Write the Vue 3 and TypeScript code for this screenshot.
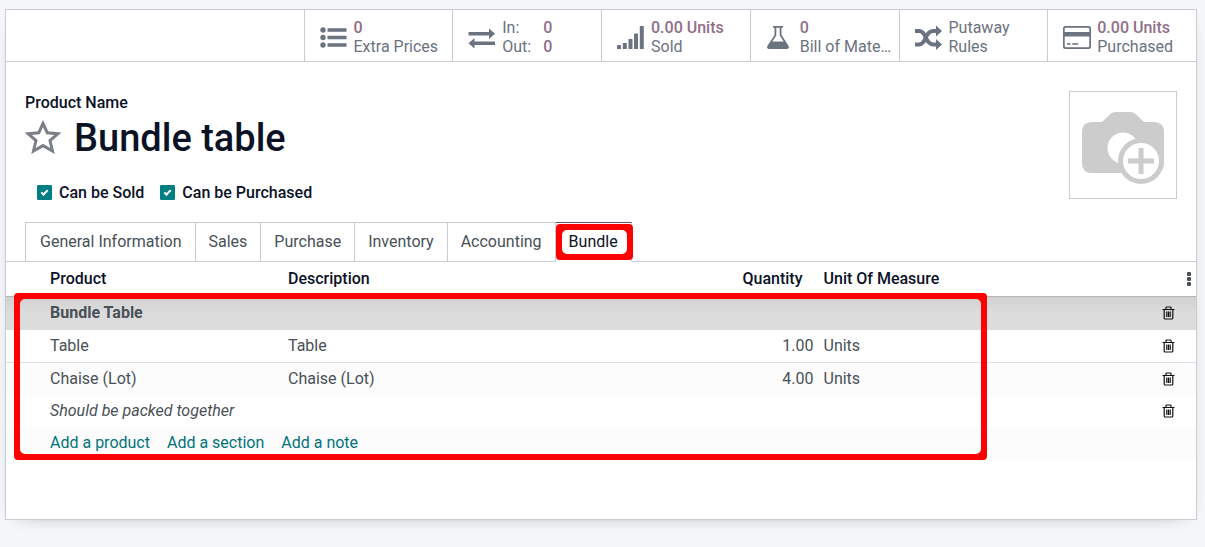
<script setup lang="ts">
import { ref } from 'vue'

interface Stat {
  icon: 'list' | 'exchange' | 'signal' | 'flask' | 'shuffle' | 'card'
  value?: string
  label?: string
  lines?: string[]
  pairs?: [string, string][]
}

interface Line {
  kind: 'section' | 'product' | 'note'
  name: string
  description?: string
  quantity?: string
  uom?: string
}

const stats: Stat[] = [
  { icon: 'list', value: '0', label: 'Extra Prices' },
  { icon: 'exchange', pairs: [['In:', '0'], ['Out:', '0']] },
  { icon: 'signal', value: '0.00 Units', label: 'Sold' },
  { icon: 'flask', value: '0', label: 'Bill of Mate…' },
  { icon: 'shuffle', lines: ['Putaway', 'Rules'] },
  { icon: 'card', value: '0.00 Units', label: 'Purchased' },
]

const tabs = ['General Information', 'Sales', 'Purchase', 'Inventory', 'Accounting', 'Bundle']
const activeTab = ref('Bundle')
const canBeSold = ref(true)
const canBePurchased = ref(true)

const lines: Line[] = [
  { kind: 'section', name: 'Bundle Table' },
  { kind: 'product', name: 'Table', description: 'Table', quantity: '1.00', uom: 'Units' },
  { kind: 'product', name: 'Chaise (Lot)', description: 'Chaise (Lot)', quantity: '4.00', uom: 'Units' },
  { kind: 'note', name: 'Should be packed together' },
]
</script>

<template>
  <main class="sheet">
    <div class="stats">
      <button v-for="s in stats" :key="s.icon" type="button" class="stat">
        <svg class="stat-icon" viewBox="0 -1 28 28" aria-hidden="true">
          <g v-if="s.icon === 'list'">
            <circle cx="3" cy="6" r="2.7" /><circle cx="3" cy="13.5" r="2.7" /><circle cx="3" cy="21" r="2.7" />
            <rect x="7.5" y="4.3" width="19" height="3.4" rx=".5" />
            <rect x="7.5" y="11.8" width="19" height="3.4" rx=".5" />
            <rect x="7.5" y="19.3" width="19" height="3.4" rx=".5" />
          </g>
          <g v-else-if="s.icon === 'exchange'">
            <path d="M.5 8h20.500V4.500L27 9.700l-6 5.300v-3.500H.5z" />
            <path d="M27 17.500H6.500V14L.5 19.200l6 5.300V21H27z" />
          </g>
          <g v-else-if="s.icon === 'signal'">
            <rect x="0" y="21" width="4" height="4" rx=".6" />
            <rect x="5.800" y="19" width="4" height="6" rx=".6" />
            <rect x="11.500" y="15" width="4" height="10" rx=".6" />
            <rect x="17" y="9.500" width="4" height="15.500" rx=".6" />
            <rect x="22.800" y="2" width="4" height="23" rx=".6" />
          </g>
          <path
            v-else-if="s.icon === 'flask'"
            fill-rule="evenodd"
            d="M7 2h10v1.800h-1.500v7.200l7 10.800c1 1.800.2 3.200-1.700 3.200H3.200c-1.900 0-2.700-1.400-1.700-3.200l7-10.800V3.800H7zM10.300 3.800v7.800L6.300 17.500h11.400l-4-5.900V3.800z"
          />
          <g v-else-if="s.icon === 'shuffle'">
            <path class="stroke" d="M0 7h4c3 0 5 2 6.800 6.500S15 20.500 18.500 20.500H22" />
            <path class="stroke" d="M0 20.500h4c3 0 5-2.500 6.800-7S15 7 18.500 7H22" />
            <path d="M21 1.500l6 5.500-6 5.500zM21 15l6 5.500-6 5.500z" />
          </g>
          <path
            v-else
            fill-rule="evenodd"
            d="M2.500 2h23A2.500 2.500 0 0 1 28 4.500v18a2.500 2.500 0 0 1-2.500 2.500h-23A2.500 2.500 0 0 1 0 22.500v-18A2.500 2.500 0 0 1 2.500 2zM1.700 5v3h24.600V5a1.300 1.300 0 0 0-1.300-1.300H3A1.300 1.300 0 0 0 1.700 5zM1.700 12.500v9.500a1.300 1.300 0 0 0 1.300 1.300h22a1.300 1.300 0 0 0 1.300-1.300v-9.500zM4 19.200h3.500v1.600H4zM9.200 19.200h6v1.600h-6z"
          />
        </svg>
        <span v-if="s.pairs" class="pairs">
          <template v-for="p in s.pairs" :key="p[0]">
            <span>{{ p[0] }}</span><span class="value">{{ p[1] }}</span>
          </template>
        </span>
        <span v-else-if="s.lines" class="stat-text">
          <span v-for="l in s.lines" :key="l">{{ l }}</span>
        </span>
        <span v-else class="stat-text">
          <span class="value">{{ s.value }}</span>
          <span>{{ s.label }}</span>
        </span>
      </button>
    </div>

    <header class="head">
      <div class="head-main">
        <div class="field-label">Product Name</div>
        <div class="title-row">
          <button type="button" class="star" aria-label="Favorite">
            <svg viewBox="0 0 36 36" aria-hidden="true">
              <path d="M18 3.500L22.300 12.800L33 13.700L25 20.600L27.500 31L18 25.600L8.500 31L11 20.600L3 13.700L13.700 12.800Z" />
            </svg>
          </button>
          <h1>Bundle table</h1>
        </div>
        <div class="options">
          <label><input v-model="canBeSold" type="checkbox" />Can be Sold</label>
          <label><input v-model="canBePurchased" type="checkbox" />Can be Purchased</label>
        </div>
      </div>
      <button type="button" class="photo" aria-label="Add image">
        <svg viewBox="0 0 106 106" aria-hidden="true">
          <path class="grey" d="M22 30h10l9-8.500q1.500-1.500 4-1.500h16q2.500 0 4 1.500L74 30h10q10 0 10 10v31q0 10-10 10H22q-10 0-10-10V40q0-10 10-10z" />
          <circle class="white" cx="53" cy="56" r="15.500" />
          <circle class="grey" cx="71" cy="69" r="23" />
          <circle class="white" cx="71" cy="69" r="18" />
          <path class="grey" d="M68.500 56h5v10.500H84v5H73.500V82h-5V71.500H58v-5h10.500z" />
        </svg>
      </button>
    </header>

    <div class="tabs" role="tablist">
      <button
        v-for="t in tabs"
        :key="t"
        type="button"
        role="tab"
        class="tab"
        :class="{ active: t === activeTab }"
        :aria-selected="t === activeTab"
        @click="activeTab = t"
      >
        {{ t }}
        <span v-if="t === 'Bundle'" class="mark tab-mark"></span>
      </button>
    </div>

    <section class="lines">
      <table>
        <colgroup>
          <col class="c-handle" /><col class="c-product" /><col class="c-desc" />
          <col class="c-qty" /><col /><col class="c-action" />
        </colgroup>
        <thead>
          <tr>
            <th></th>
            <th>Product</th>
            <th>Description</th>
            <th class="num">Quantity</th>
            <th>Unit Of Measure</th>
            <th class="more-cell">
              <button type="button" class="more" aria-label="Optional columns">
                <svg viewBox="0 0 4 14" aria-hidden="true">
                  <rect y="0" width="4" height="4" rx="1" /><rect y="5" width="4" height="4" rx="1" /><rect y="10" width="4" height="4" rx="1" />
                </svg>
              </button>
            </th>
          </tr>
        </thead>
        <tbody>
          <tr v-for="l in lines" :key="l.name" :class="l.kind">
            <td></td>
            <template v-if="l.kind === 'product'">
              <td>{{ l.name }}</td>
              <td>{{ l.description }}</td>
              <td class="num">{{ l.quantity }}</td>
              <td>{{ l.uom }}</td>
            </template>
            <td v-else colspan="4">{{ l.name }}</td>
            <td>
              <button type="button" class="trash" aria-label="Delete row">
                <svg viewBox="0 0 13 14" aria-hidden="true">
                  <path d="M.5 3.500h12M4 3V1.500Q4 1 4.500 1h4q.5 0 .5.500V3M2.200 4v8q0 1 1 1h6.600q1 0 1-1V4M4.800 5.500v5.500M6.500 5.500v5.500M8.200 5.500v5.500" />
                </svg>
              </button>
            </td>
          </tr>
          <tr class="adders">
            <td></td>
            <td colspan="5">
              <div class="links">
                <a href="#">Add a product</a>
                <a href="#">Add a section</a>
                <a href="#">Add a note</a>
              </div>
            </td>
          </tr>
        </tbody>
      </table>
      <span class="mark table-mark"></span>
    </section>
  </main>
</template>

<style>
body {
  margin: 0;
  background: #f6f7fb;
}
</style>

<style scoped>
.sheet {
  box-sizing: border-box;
  margin: 9px 8px 27px 5px;
  padding-bottom: 60px;
  border: 1px solid #c9ccd2;
  background: #fff;
  box-shadow: 0 5px 20px -15px rgba(0, 0, 0, 0.6);
  font: 16px/20px Roboto, sans-serif;
  color: #495057;
}
button {
  margin: 0;
  padding: 0;
  border: 0;
  background: none;
  font: inherit;
  color: inherit;
  cursor: pointer;
}
svg {
  display: block;
}
.stats {
  display: flex;
  justify-content: flex-end;
  border-bottom: 1px solid #c9ccd2;
}
.stat {
  box-sizing: border-box;
  flex: 0 0 12.5%;
  min-width: 0;
  height: 51px;
  display: flex;
  align-items: center;
  gap: 6px;
  padding: 2px 0 0 15px;
  border-left: 1px solid #c9ccd2;
  text-align: left;
  white-space: nowrap;
  line-height: 19px;
  color: #6b7280;
}
.stat-icon {
  flex: none;
  width: 28px;
  height: 28px;
  fill: #6b7280;
}
.stat-icon .stroke {
  fill: none;
  stroke: #6b7280;
  stroke-width: 4;
}
.stat-text {
  display: flex;
  flex-direction: column;
}
.pairs {
  display: grid;
  grid-template-columns: auto auto;
  column-gap: 12px;
}
.value {
  font-weight: 500;
  color: #8f6f88;
}
.head {
  display: flex;
  justify-content: space-between;
  align-items: flex-start;
  padding: 29px 19px 19px;
  color: #0b1226;
}
.head-main {
  padding-top: 1px;
}
.field-label {
  font-weight: 500;
  line-height: 22px;
}
.title-row {
  display: flex;
  align-items: center;
  gap: 13px;
  margin-top: 2px;
}
.star svg {
  width: 36px;
  height: 36px;
  fill: none;
  stroke: #7b7f88;
  stroke-width: 3;
}
h1 {
  margin: 0;
  font-size: 38px;
  line-height: 44px;
  font-weight: 500;
}
.options {
  display: flex;
  gap: 16px;
  margin: 22px 0 0 12px;
  font-weight: 500;
  line-height: 21px;
}
.options label {
  display: flex;
  align-items: center;
  gap: 7px;
}
.options input {
  appearance: none;
  display: grid;
  place-items: center;
  width: 15px;
  height: 15px;
  margin: 0;
  border: 1px solid #017e84;
  border-radius: 1px;
}
.options input:checked {
  background: #017e84;
}
.options input:checked::after {
  content: '';
  width: 5px;
  height: 2px;
  margin-bottom: 2px;
  border: solid #fff;
  border-width: 0 0 2px 2px;
  transform: rotate(-45deg);
}
.photo {
  flex: none;
  border: 1px solid #c9ccd2;
}
.photo svg {
  width: 106px;
  height: 106px;
}
.grey {
  fill: #ccc;
}
.white {
  fill: #fff;
}
.tabs {
  display: flex;
  padding-left: 19px;
  border-bottom: 1px solid #c9ccd2;
}
.tab {
  position: relative;
  height: 40px;
  margin-bottom: -1px;
  padding: 0 13px 1px;
  border: 1px solid #c9ccd2;
  border-left-width: 0;
  white-space: nowrap;
}
.tab:first-child {
  border-left-width: 1px;
  padding-left: 14px;
}
.tab.active {
  border-top-color: #714b67;
  border-bottom-color: #fff;
  background: #fff;
  color: #0b1226;
}
.mark {
  position: absolute;
  border: 6px solid #f00;
  border-radius: 4px;
  pointer-events: none;
}
.mark::before {
  content: '';
  position: absolute;
  inset: -2px;
  border: 2px solid #f00;
  border-radius: 7px;
}
.tab-mark {
  inset: 1px -2px 1px 0;
}
.lines {
  position: relative;
}
.table-mark {
  inset: 31px 17.6% -1px 8px;
}
table {
  width: 100%;
  table-layout: fixed;
  border-collapse: separate;
  border-spacing: 0;
}
.c-handle {
  width: 39px;
}
.c-product {
  width: 20%;
}
.c-desc {
  width: 35%;
}
.c-qty {
  width: 10%;
}
.c-action {
  width: 39px;
}
th,
td {
  box-sizing: border-box;
  height: 32px;
  padding: 0 5px;
  text-align: left;
  white-space: nowrap;
}
th {
  height: 35px;
  border-bottom: 1px solid #b5b5b5;
  font-weight: 500;
  color: #0b1226;
}
.num {
  text-align: right;
}
th.num {
  padding-right: 16px;
}
.section {
  background: linear-gradient(#d2d2d2, #dcdcdc 50%);
}
.section td {
  height: 33px;
  padding-bottom: 1px;
  font-weight: 700;
}
.section + .product td {
  height: 33px;
  border-bottom: 1px solid #dee0e3;
}
.product:nth-child(odd),
.adders {
  background: #fcfcfc;
}
.note td {
  font-style: italic;
}
.more-cell {
  padding-right: 5px;
}
.more {
  display: block;
  margin-left: auto;
}
.more svg {
  width: 4px;
  height: 14px;
  fill: #495057;
}
.trash {
  display: block;
}
.trash svg {
  width: 13px;
  height: 14px;
  fill: none;
  stroke: #111;
  stroke-width: 1.2;
}
.links {
  display: flex;
  gap: 17px;
}
.links a {
  color: #01737a;
  text-decoration: none;
}
</style>
